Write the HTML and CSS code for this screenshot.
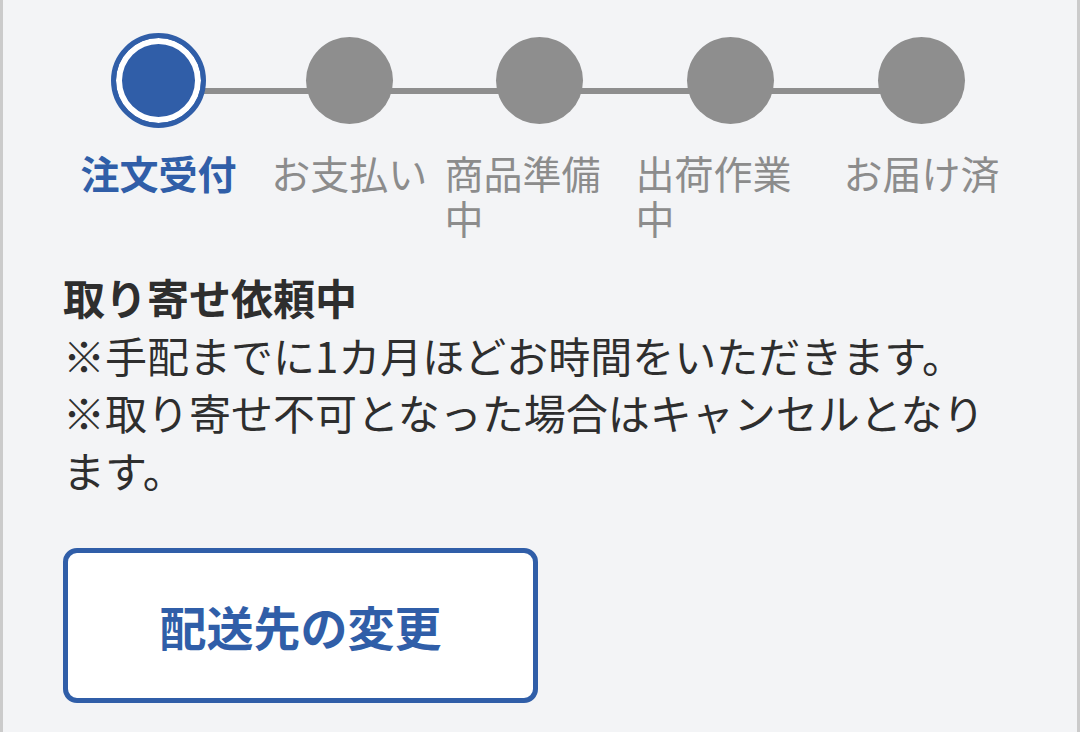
FILE: index.html
```html
<!DOCTYPE html>
<html lang="ja">
<head>
    <meta charset="UTF-8">
    <meta name="viewport" content="width=device-width, initial-scale=1.0">
    <title>注文状況</title>
    <link rel="stylesheet" href="styles.css">
</head>
<body>
    <div class="panel">
        <ol class="steps">
            <li class="step is-current"><span class="dot-wrap"><span class="dot"></span></span><span class="label">注文受付</span></li>
            <li class="step"><span class="dot-wrap"><span class="dot"></span></span><span class="label">お支払い</span></li>
            <li class="step"><span class="dot-wrap"><span class="dot"></span></span><span class="label">商品準備中</span></li>
            <li class="step"><span class="dot-wrap"><span class="dot"></span></span><span class="label">出荷作業中</span></li>
            <li class="step"><span class="dot-wrap"><span class="dot"></span></span><span class="label">お届け済</span></li>
        </ol>
        <div class="status">
            <p class="status-title">取り寄せ依頼中</p>
            <p class="status-note">※手配までに1カ月ほどお時間をいただきます。<br>※取り寄せ不可となった場合はキャンセルとなります。</p>
        </div>
        <button class="btn-change" type="button">配送先の変更</button>
    </div>
</body>
</html>
```

FILE: styles.css
```css
*{
    margin: 0;
    padding: 0;
    box-sizing: border-box;
}
li{
    list-style: none;
}
body{
    background: #f3f4f6;
    font-family: "Noto Sans CJK JP", "Noto Sans", sans-serif;
    color: #333;
}
.panel{
    width: 1080px;
    min-height: 100vh;
    padding: 32px 60px 0;
    background: #f3f4f6;
    border-left: 3px solid #cbcbcb;
    border-right: 3px solid #cbcbcb;
}

/* ステップ表示 */
.steps{
    display: grid;
    grid-template-columns: repeat(5, 1fr);
}
.step{
    position: relative;
    display: flex;
    flex-direction: column;
    align-items: center;
}
/* 次のステップへのつなぎ線 */
.step:not(:last-child)::after{
    content: "";
    position: absolute;
    top: 56px;
    left: 50%;
    width: 100%;
    height: 6px;
    background: #8e8e8e;
}
.dot-wrap{
    height: 96px;
    display: flex;
    align-items: center;
    justify-content: center;
}
.dot{
    position: relative;
    z-index: 1;
    display: block;
    width: 87px;
    height: 87px;
    border-radius: 50%;
    background: #8e8e8e;
}
.is-current .dot{
    width: 95px;
    height: 95px;
    background: #305ea8;
    border: 5px solid #305ea8;
    box-shadow: inset 0 0 0 6px #fff;
}
.label{
    margin-top: 22px;
    font-size: 39px;
    line-height: 45px;
    color: #8c8c8c;
    text-align: left;
}
.is-current .label{
    color: #305ea8;
    font-weight: 700;
}

/* 取り寄せ状況 */
.status{
    margin-top: 28px;
    font-size: 42px;
    line-height: 57.5px;
    color: #2e2e2e;
}
.status-title{
    font-weight: 700;
}

.btn-change{
    display: block;
    width: 475px;
    height: 155px;
    margin-top: 50px;
    background: #fff;
    border: 5px solid #305ea8;
    border-radius: 14px;
    font-family: "Noto Sans CJK JP", sans-serif;
    font-size: 47px;
    font-weight: 700;
    color: #305ea8;
}
```
